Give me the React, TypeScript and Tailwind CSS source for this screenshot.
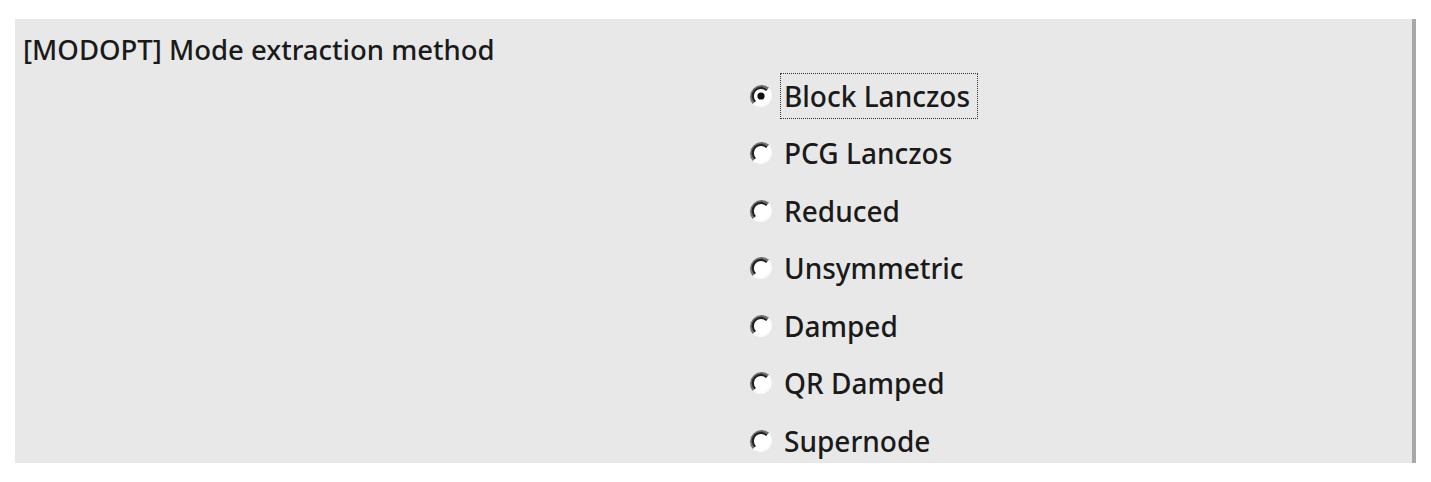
import React from 'react';

const options = [
  'Block Lanczos',
  'PCG Lanczos',
  'Reduced',
  'Unsymmetric',
  'Damped',
  'QR Damped',
  'Supernode',
];

const Radio: React.FC<{ checked?: boolean }> = ({ checked }) => (
  <svg width="26" height="26" viewBox="0 0 26 26" className="shrink-0" style={{ filter: 'blur(0.5px)' }}>
    <circle cx="13" cy="13" r="10.5" fill="#ffffff" />
    <path d="M5.6 20.4 A10.5 10.5 0 0 1 20.4 5.6" fill="none" stroke="#707070" strokeWidth="2.2" />
    <path d="M7.2 18.8 A8.2 8.2 0 0 1 18.8 7.2" fill="none" stroke="#222222" strokeWidth="2.2" />
    <path d="M20.4 5.6 A10.5 10.5 0 0 1 5.6 20.4" fill="none" stroke="#fbfbfb" strokeWidth="2.2" />
    {checked && <circle cx="13" cy="13" r="3.6" fill="#111111" />}
  </svg>
);

const App: React.FC = () => {
  return (
    <div className="w-[1431px] h-[482px] bg-white pt-[19px] pl-[15px]" style={{ fontFamily: '"Noto Sans", "Open Sans", sans-serif' }}>
      <div className="w-[1401px] h-[444px] bg-[#e8e8e8] border-r-[4px] border-[#a8a8a8] text-[#1a1a1a]">
        <div className="pl-[8px] pt-[12px] text-[27.5px] leading-[38px] font-medium">[MODOPT] Mode extraction method</div>
        <div className="ml-[733px] -mt-[2px] flex flex-col">
          {options.map((label, i) => (
            <label key={label} className="flex items-center h-[57.5px] gap-[9px] text-[28px] font-medium">
              <Radio checked={i === 0} />
              <span className={i === 0 ? 'pl-[3px] pr-[7px] -ml-[3px] border border-dotted border-[#333] leading-[44px]' : 'leading-[44px] pl-[3px] pr-[7px] -ml-[3px] border border-transparent'}>
                {label}
              </span>
            </label>
          ))}
        </div>
      </div>
    </div>
  );
};

export default App;
